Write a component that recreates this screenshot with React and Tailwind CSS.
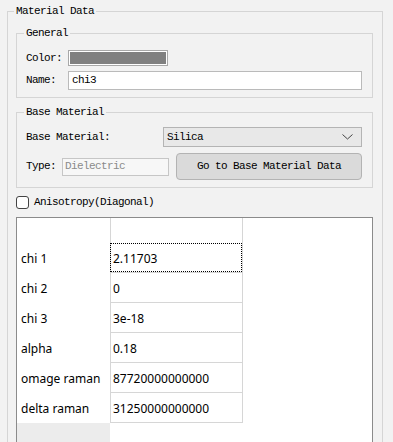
import React from 'react';

const rows = [
    { name: 'chi 1', value: '2.11703', focus: true },
    { name: 'chi 2', value: '0' },
    { name: 'chi 3', value: '3e-18' },
    { name: 'alpha', value: '0.18' },
    { name: 'omage raman', value: '87720000000000' },
    { name: 'delta raman', value: '31250000000000' },
];

const mono = { fontFamily: '"Liberation Mono", monospace' };

function Legend({ children }) {
    return (
        <legend className="-ml-[2px] px-[2px] leading-[12px] text-[11px] tracking-[-0.6px] text-black">{children}</legend>
    );
}

export default function App() {
    return (
        <div className="w-[393px] h-[442px] overflow-hidden bg-[#f2f2f2] pt-[5px] pl-[7px]" style={mono}>
            {/* Material Data group */}
            <fieldset className="w-[376px] h-[470px] border border-[#d5d5d5] pl-[8px] pr-[9px]">
                <Legend>Material Data</Legend>

                {/* General */}
                <fieldset className="mt-[10px] w-[357px] border border-[#d5d5d5] pl-[9px] pt-[11px] pb-[7px]">
                    <Legend>General</Legend>
                    <div className="flex items-center h-[16px]">
                        <span className="w-[42px] text-[11px] tracking-[-0.6px]">Color:</span>
                        <div className="w-[100px] h-[16px] border border-[#a8a8a8] bg-white p-[1px]">
                            <div className="w-full h-full bg-[#808080]"></div>
                        </div>
                    </div>
                    <div className="flex items-center mt-[5px] h-[19px]">
                        <span className="w-[42px] text-[11px] tracking-[-0.6px]">Name:</span>
                        <div className="w-[294px] h-[19px] border border-[#bababa] bg-white pl-[3px] flex items-center text-[11px] tracking-[-0.6px]">chi3</div>
                    </div>
                </fieldset>

                {/* Base Material */}
                <fieldset className="mt-[8px] w-[357px] border border-[#d5d5d5] pl-[9px] pt-[9px] pb-[7px]">
                    <Legend>Base Material</Legend>
                    <div className="flex items-center h-[20px]">
                        <span className="w-[137px] text-[11px] tracking-[-0.6px]">Base Material:</span>
                        <div className="w-[199px] h-[20px] border border-[#b4b4b4] bg-[#e8e8e8] pl-[3px] pr-[8px] flex items-center justify-between text-[11px] tracking-[-0.6px]">
                            <span>Silica</span>
                            <svg width="11" height="6" viewBox="0 0 11 6" fill="none" stroke="#444" strokeWidth="1">
                                <polyline points="0.5,0.5 5.5,5 10.5,0.5" />
                            </svg>
                        </div>
                    </div>
                    <div className="flex items-center mt-[6px] h-[27px]">
                        <span className="w-[36px] text-[11px] tracking-[-0.6px]">Type:</span>
                        <div className="w-[107px] h-[18px] border border-[#c6c6c6] bg-[#f7f7f7] pl-[2px] flex items-center text-[11px] tracking-[-0.6px] text-[#8a8a8a]">Dielectric</div>
                        <button className="ml-[7px] w-[186px] h-[27px] rounded-[4px] border border-[#b3b3b3] bg-[#dadada] text-[11px] tracking-[-0.6px] text-black">Go to Base Material Data</button>
                    </div>
                </fieldset>

                {/* Anisotropy */}
                <div className="mt-[8px] flex items-center gap-[5px] h-[13px]">
                    <div className="w-[13px] h-[13px] rounded-[3px] border border-[#444] bg-white"></div>
                    <span className="text-[11px] tracking-[-0.6px]">Anisotropy(Diagonal)</span>
                </div>

                {/* Table */}
                <div className="mt-[8px] w-[357px] h-[240px] border border-[#8b8b8b] bg-white flex flex-col" style={{ fontFamily: '"Noto Sans", sans-serif' }}>
                    <div className="flex h-[25px] shrink-0">
                        <div className="w-[94px] border-r border-[#d6d6d6]"></div>
                        <div className="w-[132px] border-r border-[#d6d6d6]"></div>
                    </div>
                    {rows.map((r) => (
                        <div key={r.name} className="flex h-[30px] shrink-0">
                            <div className="w-[94px] border-r border-[#d6d6d6] pl-[4px] pt-[2px] flex items-center text-[12px] text-black">{r.name}</div>
                            <div className="w-[132px] border-r border-b border-[#d6d6d6]">
                                <div className={`h-full flex items-center pl-[2px] pt-[2px] text-[12px] text-black ${r.focus ? 'border border-dotted border-black -ml-px' : ''}`}>{r.value}</div>
                            </div>
                        </div>
                    ))}
                    <div className="flex flex-1">
                        <div className="w-[93px] bg-[#ececec]"></div>
                    </div>
                </div>
            </fieldset>
        </div>
    );
}
